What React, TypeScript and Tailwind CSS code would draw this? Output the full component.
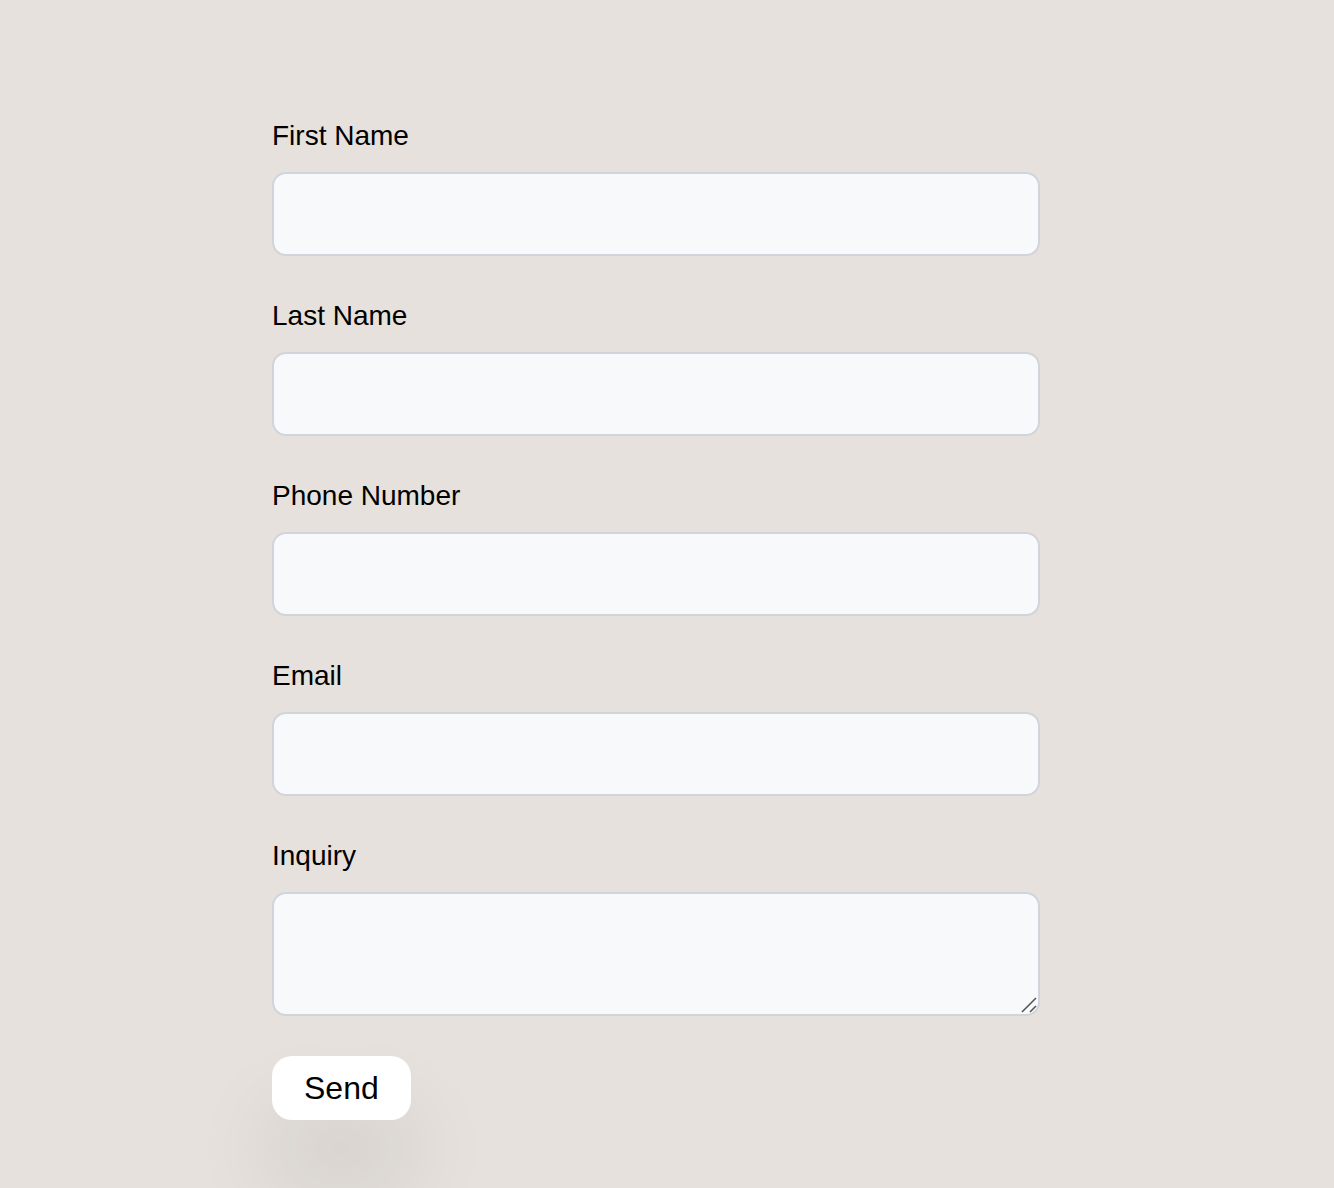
import React from "react";

const fields = ["First Name", "Last Name", "Phone Number", "Email"];

export default function App() {
  return (
    <div
      className="min-h-[1188px] w-full bg-[#e6e1dc] pt-[120px] pl-[272px]"
      style={{ fontFamily: '"Liberation Sans", Arial, sans-serif' }}
    >
      <form className="flex w-[768px] flex-col" onSubmit={(e) => e.preventDefault()}>
        {fields.map((f) => (
          <div key={f} className="mb-[44px] flex flex-col">
            <label className="mb-[20px] text-[28px] leading-[32px] text-black">{f}</label>
            <input
              type="text"
              className="h-[84px] w-full rounded-[14px] border-2 border-[#d2d4dc] bg-[#f8f9fb] px-4 text-[20px] outline-none"
            />
          </div>
        ))}
        <div className="flex flex-col">
          <label className="mb-[20px] text-[28px] leading-[32px] text-black">Inquiry</label>
          <div className="relative">
            <textarea className="block h-[124px] w-full resize-none rounded-[14px] border-2 border-[#d2d4dc] bg-[#f8f9fb] px-4 py-3 text-[20px] outline-none" />
            <svg
              className="pointer-events-none absolute bottom-[3px] right-[3px]"
              width="16"
              height="16"
              viewBox="0 0 16 16"
            >
              <line x1="1" y1="15" x2="15" y2="1" stroke="#555" strokeWidth="1.6" />
              <line x1="9" y1="15" x2="15" y2="9" stroke="#555" strokeWidth="1.6" />
            </svg>
          </div>
        </div>
        <div className="mt-[40px]">
          <button
            type="submit"
            className="rounded-[20px] bg-white px-[32px] py-[13px] text-[32px] leading-[38px] text-black shadow-[0_60px_90px_rgba(0,0,0,0.11)]"
          >
            Send
          </button>
        </div>
      </form>
    </div>
  );
}
